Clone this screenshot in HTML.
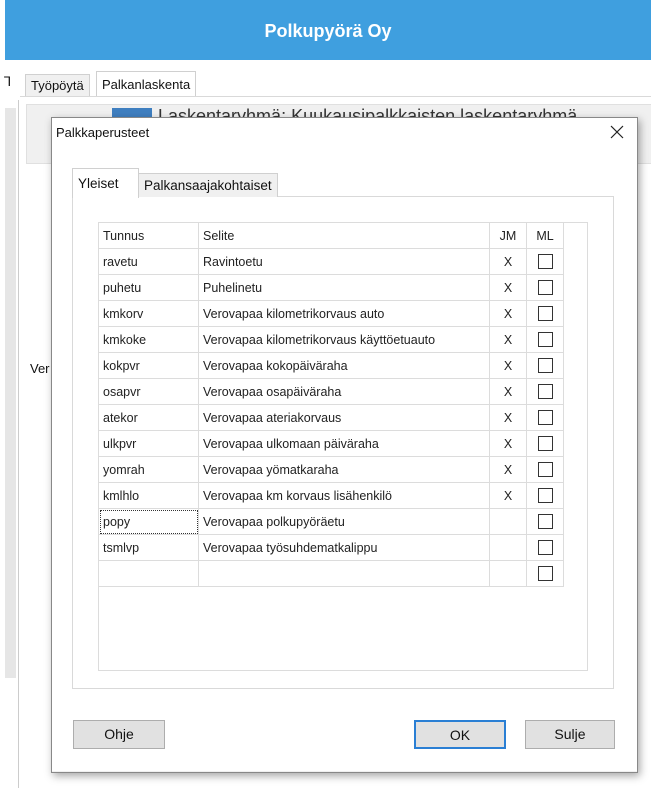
<!DOCTYPE html>
<html><head><meta charset="utf-8"><style>
body{margin:0;width:651px;height:788px;position:relative;background:#fff;font-family:"Liberation Sans",sans-serif;overflow:hidden;font-size:13px;color:#111}
.a{position:absolute}
.hdr{left:5px;top:0;width:646px;height:60px;background:#3f9fdf;color:#fff;font-weight:bold;font-size:18px;text-align:center;line-height:62px}
.tab{border:1px solid #d0d0d0;border-bottom:none;background:#f0f0f0;padding:0 5px;line-height:22px}
table{border-collapse:collapse;position:absolute;left:98px;top:222px}
td{border:1px solid #dcdcdc;height:25px;padding:0 4px;font-size:12.5px;color:#222}
.cb{display:inline-block;width:13px;height:13px;border:1px solid #333;vertical-align:middle}
.btn{border:1px solid #adadad;background:#e1e1e1;text-align:center;line-height:27px;font-size:14px}
</style></head><body>
<div class="a hdr">Polkupyörä Oy</div>
<div class="a" style="left:4px;top:74px;font-size:13px">⅂</div>
<div class="a tab" style="left:25px;top:74px;height:22px;background:#f0f0f0">Työpöytä</div>
<div class="a tab" style="left:96px;top:71px;height:25px;background:#fff;line-height:26px">Palkanlaskenta</div>
<div class="a" style="left:20px;top:96px;width:631px;height:1px;background:#d9d9d9"></div>
<div class="a" style="left:5px;top:108px;width:11px;height:570px;background:#e6e6e6"></div>
<div class="a" style="left:18px;top:100px;width:1px;height:688px;background:#ccc"></div>
<div class="a" style="left:26px;top:104px;width:625px;height:58px;background:#f0f0f0;border:1px solid #e0e0e0"></div>
<div class="a" style="left:112px;top:108px;width:40px;height:10px;background:#3f7fc0"></div>
<div class="a" style="left:158px;top:106px;font-size:18px;color:#333">Laskentaryhmä: Kuukausipalkkaisten laskentaryhmä</div>
<div class="a" style="left:30px;top:361px">Ver</div>
<div class="a" style="left:51px;top:117px;width:585px;height:654px;background:#f0f0f0;border:1px solid #888;box-shadow:2px 3px 8px rgba(0,0,0,.35)"></div>
<div class="a" style="left:52px;top:118px;width:585px;height:30px;background:#fff"></div>
<div class="a" style="left:56px;top:125px;font-size:13px">Palkkaperusteet</div>
<svg class="a" style="left:610px;top:125px" width="14" height="14"><path d="M1 1L13 13M13 1L1 13" stroke="#222" stroke-width="1.2"/></svg>
<div class="a" style="left:52px;top:148px;width:585px;height:623px;background:#fff"></div>
<div class="a" style="left:72px;top:196px;width:540px;height:491px;background:#fff;border:1px solid #d9d9d9"></div>
<div class="a tab" style="left:138px;top:173px;height:23px;background:#f0f0f0;line-height:23px;font-size:13.5px">Palkansaajakohtaiset</div>
<div class="a tab" style="left:72px;top:168px;height:29px;width:55px;background:#fff;line-height:30px;font-size:13.5px">Yleiset</div>
<div class="a" style="left:98px;top:222px;width:488px;height:447px;border:1px solid #dcdcdc"></div>
<table>
<tr><td style="width:91px">Tunnus</td><td style="width:282px">Selite</td><td style="width:28px;text-align:center">JM</td><td style="width:28px;text-align:center">ML</td></tr>
<tr><td>ravetu</td><td>Ravintoetu</td><td style="text-align:center">X</td><td style="text-align:center"><span class="cb"></span></td></tr>
<tr><td>puhetu</td><td>Puhelinetu</td><td style="text-align:center">X</td><td style="text-align:center"><span class="cb"></span></td></tr>
<tr><td>kmkorv</td><td>Verovapaa kilometrikorvaus auto</td><td style="text-align:center">X</td><td style="text-align:center"><span class="cb"></span></td></tr>
<tr><td>kmkoke</td><td>Verovapaa kilometrikorvaus käyttöetuauto</td><td style="text-align:center">X</td><td style="text-align:center"><span class="cb"></span></td></tr>
<tr><td>kokpvr</td><td>Verovapaa kokopäiväraha</td><td style="text-align:center">X</td><td style="text-align:center"><span class="cb"></span></td></tr>
<tr><td>osapvr</td><td>Verovapaa osapäiväraha</td><td style="text-align:center">X</td><td style="text-align:center"><span class="cb"></span></td></tr>
<tr><td>atekor</td><td>Verovapaa ateriakorvaus</td><td style="text-align:center">X</td><td style="text-align:center"><span class="cb"></span></td></tr>
<tr><td>ulkpvr</td><td>Verovapaa ulkomaan päiväraha</td><td style="text-align:center">X</td><td style="text-align:center"><span class="cb"></span></td></tr>
<tr><td>yomrah</td><td>Verovapaa yömatkaraha</td><td style="text-align:center">X</td><td style="text-align:center"><span class="cb"></span></td></tr>
<tr><td>kmlhlo</td><td>Verovapaa km korvaus lisähenkilö</td><td style="text-align:center">X</td><td style="text-align:center"><span class="cb"></span></td></tr>
<tr><td style="outline:1px dotted #333;outline-offset:-2px">popy</td><td>Verovapaa polkupyöräetu</td><td></td><td style="text-align:center"><span class="cb"></span></td></tr>
<tr><td>tsmlvp</td><td>Verovapaa työsuhdematkalippu</td><td></td><td style="text-align:center"><span class="cb"></span></td></tr>
<tr><td></td><td></td><td></td><td style="text-align:center"><span class="cb"></span></td></tr>
</table>
<div class="a btn" style="left:73px;top:720px;width:90px;height:27px">Ohje</div>
<div class="a btn" style="left:414px;top:720px;width:88px;height:25px;border:2px solid #2a7fd4">OK</div>
<div class="a btn" style="left:525px;top:720px;width:88px;height:27px">Sulje</div>
</body></html>
